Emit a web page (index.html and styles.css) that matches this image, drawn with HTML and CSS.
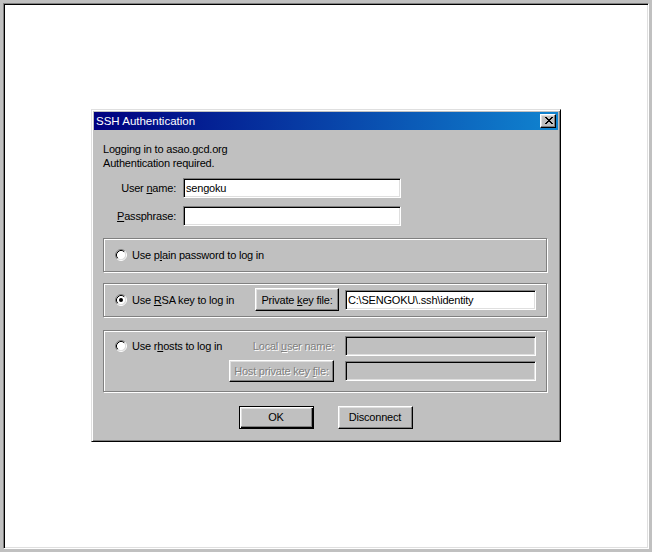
FILE: index.html
```html
<!DOCTYPE html>
<html>
<head>
<meta charset="utf-8">
<link rel="stylesheet" href="styles.css">
</head>
<body>
<div class="screen">
  <div class="dialog">
    <div class="titlebar">
      <span class="title">SSH Authentication</span>
      <span class="close">
        <svg width="8" height="7" viewBox="0 0 8 7" shape-rendering="crispEdges"><path fill="#000" d="M0 0h2v1H0z M6 0h2v1H6z M1 1h2v1H1z M5 1h2v1H5z M2 2h4v1H2z M3 3h2v1H3z M2 4h4v1H2z M1 5h2v1H1z M5 5h2v1H5z M0 6h2v1H0z M6 6h2v1H6z"/></svg>
      </span>
    </div>
    <div class="content">
      <div class="info">
        <div>Logging in to asao.gcd.org</div>
        <div>Authentication required.</div>
      </div>
      <div class="fields">
        <span class="flabel">User <u>n</u>ame:</span>
        <div class="input">sengoku</div>
        <span class="flabel"><u>P</u>assphrase:</span>
        <div class="input"></div>
      </div>

      <div class="group g1">
        <span class="radio"><svg width="12" height="12" viewBox="0 0 12 12"><circle cx="6" cy="6" r="4.5" fill="#fff"/><path d="M2.11 9.89 A5.5 5.5 0 0 1 9.89 2.11" stroke="#808080" fill="none"/><path d="M9.89 2.11 A5.5 5.5 0 0 1 2.11 9.89" stroke="#fff" fill="none"/><path d="M2.82 9.18 A4.5 4.5 0 0 1 9.18 2.82" stroke="#000" fill="none"/><path d="M9.18 2.82 A4.5 4.5 0 0 1 2.82 9.18" stroke="#dfdfdf" fill="none"/></svg></span>
        <span class="rlabel">Use p<u>l</u>ain password to log in</span>
      </div>

      <div class="group g2">
        <span class="radio"><svg width="12" height="12" viewBox="0 0 12 12"><circle cx="6" cy="6" r="4.5" fill="#fff"/><path d="M2.11 9.89 A5.5 5.5 0 0 1 9.89 2.11" stroke="#808080" fill="none"/><path d="M9.89 2.11 A5.5 5.5 0 0 1 2.11 9.89" stroke="#fff" fill="none"/><path d="M2.82 9.18 A4.5 4.5 0 0 1 9.18 2.82" stroke="#000" fill="none"/><path d="M9.18 2.82 A4.5 4.5 0 0 1 2.82 9.18" stroke="#dfdfdf" fill="none"/><circle cx="6" cy="6" r="2" fill="#000"/></svg></span>
        <span class="rlabel grow">Use <u>R</u>SA key to log in</span>
        <span class="btn keybtn"><span>Private <u>k</u>ey file:</span></span>
        <div class="input wide">C:\SENGOKU\.ssh\identity</div>
      </div>

      <div class="group g3">
        <div class="rcell">
          <span class="radio"><svg width="12" height="12" viewBox="0 0 12 12"><circle cx="6" cy="6" r="4.5" fill="#fff"/><path d="M2.11 9.89 A5.5 5.5 0 0 1 9.89 2.11" stroke="#808080" fill="none"/><path d="M9.89 2.11 A5.5 5.5 0 0 1 2.11 9.89" stroke="#fff" fill="none"/><path d="M2.82 9.18 A4.5 4.5 0 0 1 9.18 2.82" stroke="#000" fill="none"/><path d="M9.18 2.82 A4.5 4.5 0 0 1 2.82 9.18" stroke="#dfdfdf" fill="none"/></svg></span>
          <span class="rlabel">Use r<u>h</u>osts to log in</span>
        </div>
        <span class="disabled dlabel">Local <u>u</u>ser name:</span>
        <div class="input wide off"></div>
        <span></span>
        <span class="btn hostbtn disabled"><span>Host private key <u>f</u>ile:</span></span>
        <div class="input wide off"></div>
      </div>

      <div class="actions">
        <span class="btn action default"><span>OK</span></span>
        <span class="btn action"><span>Disconnect</span></span>
      </div>
    </div>
  </div>
</div>
</body>
</html>
```

FILE: styles.css
```css
* { box-sizing: border-box; }

html, body {
  margin: 0;
  background: #c0c0c0;
}

body {
  padding: 3px;
  height: 552px;
  font-family: "Liberation Sans", Arial, sans-serif;
  font-size: 11px;
  letter-spacing: -0.2px;
  color: #000;
}

u { text-decoration: underline; text-underline-offset: 1px; }

.screen {
  width: 646px;
  height: 546px;
  background: #fff;
  border: 1px solid;
  border-color: #808080 #fff #fff #808080;
  box-shadow: inset 1px 1px 0 #000, inset -1px -1px 0 #dfdfdf;
  padding-bottom: 2px;
  display: flex;
  align-items: center;
  justify-content: center;
}

.dialog {
  width: 470px;
  height: 333px;
  background: #c0c0c0;
  border: 1px solid;
  border-color: #dfdfdf #000 #000 #dfdfdf;
  box-shadow: inset 1px 1px 0 #fff, inset -1px -1px 0 #808080;
  padding: 2px;
  display: flex;
  flex-direction: column;
}

.titlebar {
  height: 18px;
  background: linear-gradient(to right, #000080, #1084d0);
  display: flex;
  align-items: center;
  justify-content: space-between;
  padding: 0 2px 0 2px;
}

.title {
  color: #fff;
  font-size: 11.5px;
  letter-spacing: 0;
  line-height: 18px;
}

.close {
  width: 16px;
  height: 14px;
  background: #c0c0c0;
  border: 1px solid;
  border-color: #fff #000 #000 #fff;
  box-shadow: inset -1px -1px 0 #808080, inset 1px 1px 0 #dfdfdf;
  display: flex;
  align-items: center;
  justify-content: center;
  padding-left: 1px;
}

.close svg { display: block; }

.content {
  padding: 12px 10px 0 9px;
}

.info {
  line-height: 14px;
  margin-bottom: 8px;
}

.fields {
  display: grid;
  grid-template-columns: 73px 218px;
  grid-auto-rows: 20px;
  column-gap: 7px;
  row-gap: 8px;
}

.flabel {
  text-align: right;
  line-height: 20px;
  white-space: nowrap;
}

.input {
  height: 20px;
  background: #fff;
  border: 1px solid;
  border-color: #808080 #fff #fff #808080;
  box-shadow: inset 1px 1px 0 #000, inset -1px -1px 0 #dfdfdf;
  padding: 0 2px 0 2px;
  line-height: 18px;
  white-space: nowrap;
  overflow: hidden;
}

.input.wide { width: 191px; }
.input.off { background: #c0c0c0; }

.group {
  width: 444px;
  border: 1px solid #808080;
  box-shadow: inset 1px 1px 0 #fff, 1px 1px 0 #fff;
}

.g1, .g2 {
  height: 34px;
  display: flex;
  align-items: center;
  padding: 0 10px 0 11px;
}

.g1 { margin-top: 12px; }
.g2 { margin-top: 11px; }

.g3 {
  margin-top: 13px;
  height: 62px;
  display: grid;
  grid-template-columns: minmax(0, 1fr) 105px 191px;
  grid-template-rows: 22px 22px;
  row-gap: 3px;
  column-gap: 11px;
  align-items: center;
  padding: 4px 10px 0 11px;
}

.radio {
  width: 12px;
  height: 12px;
  flex: none;
}

.radio svg { display: block; }

.rcell {
  display: flex;
  align-items: center;
  min-width: 0;
}

.rlabel {
  margin-left: 5px;
  white-space: nowrap;
}

.grow { flex: 1; }

.btn {
  display: flex;
  align-items: center;
  justify-content: center;
  background: #c0c0c0;
  border: 1px solid;
  border-color: #fff #000 #000 #fff;
  box-shadow: inset -1px -1px 0 #808080, inset 1px 1px 0 #dfdfdf;
  white-space: nowrap;
}

.keybtn {
  width: 84px;
  height: 23px;
  margin-right: 6px;
}

.hostbtn {
  width: 105px;
  height: 22px;
}

.dlabel {
  justify-self: end;
  white-space: nowrap;
}

.disabled {
  color: #808080;
  text-shadow: 1px 1px 0 #fff;
}

.actions {
  margin-top: 14px;
  display: flex;
  justify-content: center;
  gap: 24px;
}

.action {
  width: 75px;
  height: 23px;
}

.default {
  border-color: #000;
  box-shadow: inset 1px 1px 0 #fff, inset -1px -1px 0 #000, inset -2px -2px 0 #808080, inset 2px 2px 0 #dfdfdf;
}
```
